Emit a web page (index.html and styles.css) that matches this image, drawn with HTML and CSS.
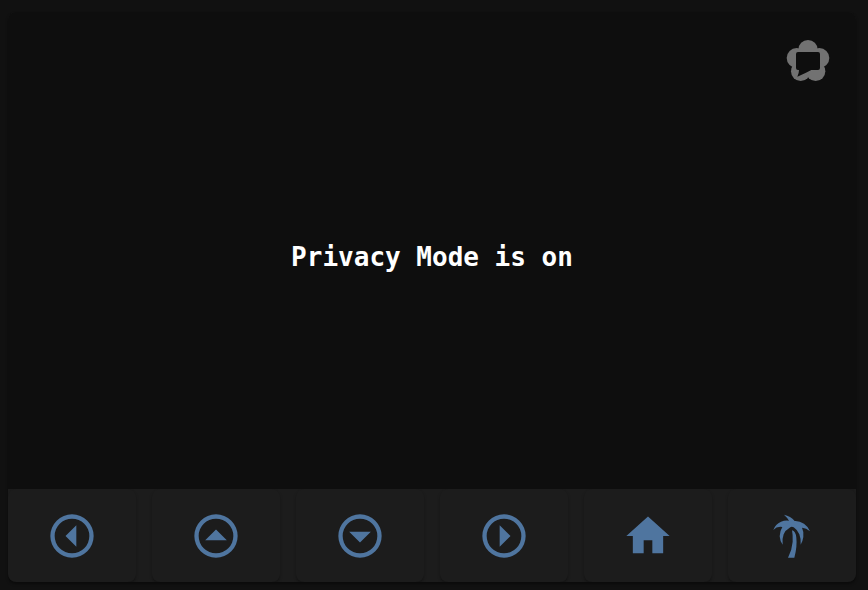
FILE: index.html
```html
<!DOCTYPE html>
<html lang="en">
<head>
<meta charset="utf-8">
<title>Camera</title>
<link rel="stylesheet" href="styles.css">
</head>
<body>
<main class="card">
  <section class="video">
    <svg class="watermark" viewBox="0 0 132 132" aria-hidden="true">
      <circle cx="66" cy="38" r="29"/>
      <circle cx="32" cy="63" r="30"/>
      <circle cx="100" cy="63" r="30"/>
      <circle cx="44" cy="103" r="29"/>
      <circle cx="89" cy="103" r="29"/>
      <path class="bubble" d="M36 45Q30 45 30 51V93Q30 99 36 99H39Q39 109 34 119Q56 110 76 99H96Q102 99 102 93V51Q102 45 96 45Z"/>
    </svg>
    <p class="message">Privacy Mode is on</p>
  </section>
  <nav class="controls" aria-label="Camera controls">
    <button class="control" type="button" aria-label="Pan left">
      <svg class="icon" viewBox="0 0 24 24"><path d="M22 12A10 10 0 1 0 2 12A10 10 0 1 0 22 12M20 12A8 8 0 1 1 4 12A8 8 0 1 1 20 12M14 7L9 12L14 17V7Z"/></svg>
    </button>
    <button class="control" type="button" aria-label="Tilt up">
      <svg class="icon" viewBox="0 0 24 24"><path d="M22 12A10 10 0 1 0 2 12A10 10 0 1 0 22 12M20 12A8 8 0 1 1 4 12A8 8 0 1 1 20 12M17 14L12 9L7 14H17Z"/></svg>
    </button>
    <button class="control" type="button" aria-label="Tilt down">
      <svg class="icon" viewBox="0 0 24 24"><path d="M22 12A10 10 0 1 0 2 12A10 10 0 1 0 22 12M20 12A8 8 0 1 1 4 12A8 8 0 1 1 20 12M7 10L12 15L17 10H7Z"/></svg>
    </button>
    <button class="control" type="button" aria-label="Pan right">
      <svg class="icon" viewBox="0 0 24 24"><path d="M22 12A10 10 0 1 0 2 12A10 10 0 1 0 22 12M20 12A8 8 0 1 1 4 12A8 8 0 1 1 20 12M10 17L15 12L10 7V17Z"/></svg>
    </button>
    <button class="control" type="button" aria-label="Home">
      <svg class="icon" viewBox="0 0 24 24"><path d="M10 20V14H14V20H19V12H22L12 3L2 12H5V20H10Z"/></svg>
    </button>
    <button class="control" type="button" aria-label="Away">
      <svg class="icon" viewBox="12 13 156 156"><path d="M66 27Q86 31 98 46Q112 45 126 54Q138 62 144 77Q133 67 120 66Q126 78 124 94Q122 108 116 117Q117 98 112 86Q107 73 95 65Q89 61 83 66Q70 73 65 86Q60 99 62 117Q54 107 53 92Q53 77 61 64Q45 61 34 73Q40 55 57 48Q69 43 81 45Q76 36 66 27ZM90 74Q101 76 103 96Q106 123 97 156H78Q90 133 92 108Q93 88 90 74Z"/></svg>
    </button>
  </nav>
</main>
</body>
</html>
```
FILE: styles.css
```css
* {
  box-sizing: border-box;
}

body {
  margin: 0;
  min-height: 100vh;
  padding: 12px 12px 8px 8px;
  display: flex;
  background: #111111;
  font-family: "DejaVu Sans Mono", monospace;
}

.card {
  flex: 1;
  display: flex;
  flex-direction: column;
  border-radius: 8px;
  overflow: hidden;
  background: #1c1c1c;
  box-shadow: 0 2px 3px rgba(0, 0, 0, 0.4);
}

.video {
  position: relative;
  flex: 1;
  display: flex;
  align-items: center;
  justify-content: center;
  padding-top: 12px;
  background: #0e0e0e;
}

.watermark {
  position: absolute;
  top: 25px;
  right: 26px;
  width: 44px;
  height: 44px;
  fill: #727272;
}

.bubble {
  fill: #0e0e0e;
}

.message {
  margin: 0;
  color: #ffffff;
  font-size: 26px;
  font-weight: 700;
  line-height: 32px;
}

.controls {
  display: grid;
  grid-template-columns: repeat(6, 1fr);
  gap: 16px;
}

.control {
  display: flex;
  align-items: center;
  justify-content: center;
  padding: 21px 0 20px;
  border: 0;
  border-radius: 8px;
  background: #1c1c1c;
  box-shadow: 0 2px 3px rgba(0, 0, 0, 0.3);
  cursor: pointer;
}

.icon {
  width: 52px;
  height: 52px;
  fill: #4f759f;
  fill-rule: evenodd;
}
```
